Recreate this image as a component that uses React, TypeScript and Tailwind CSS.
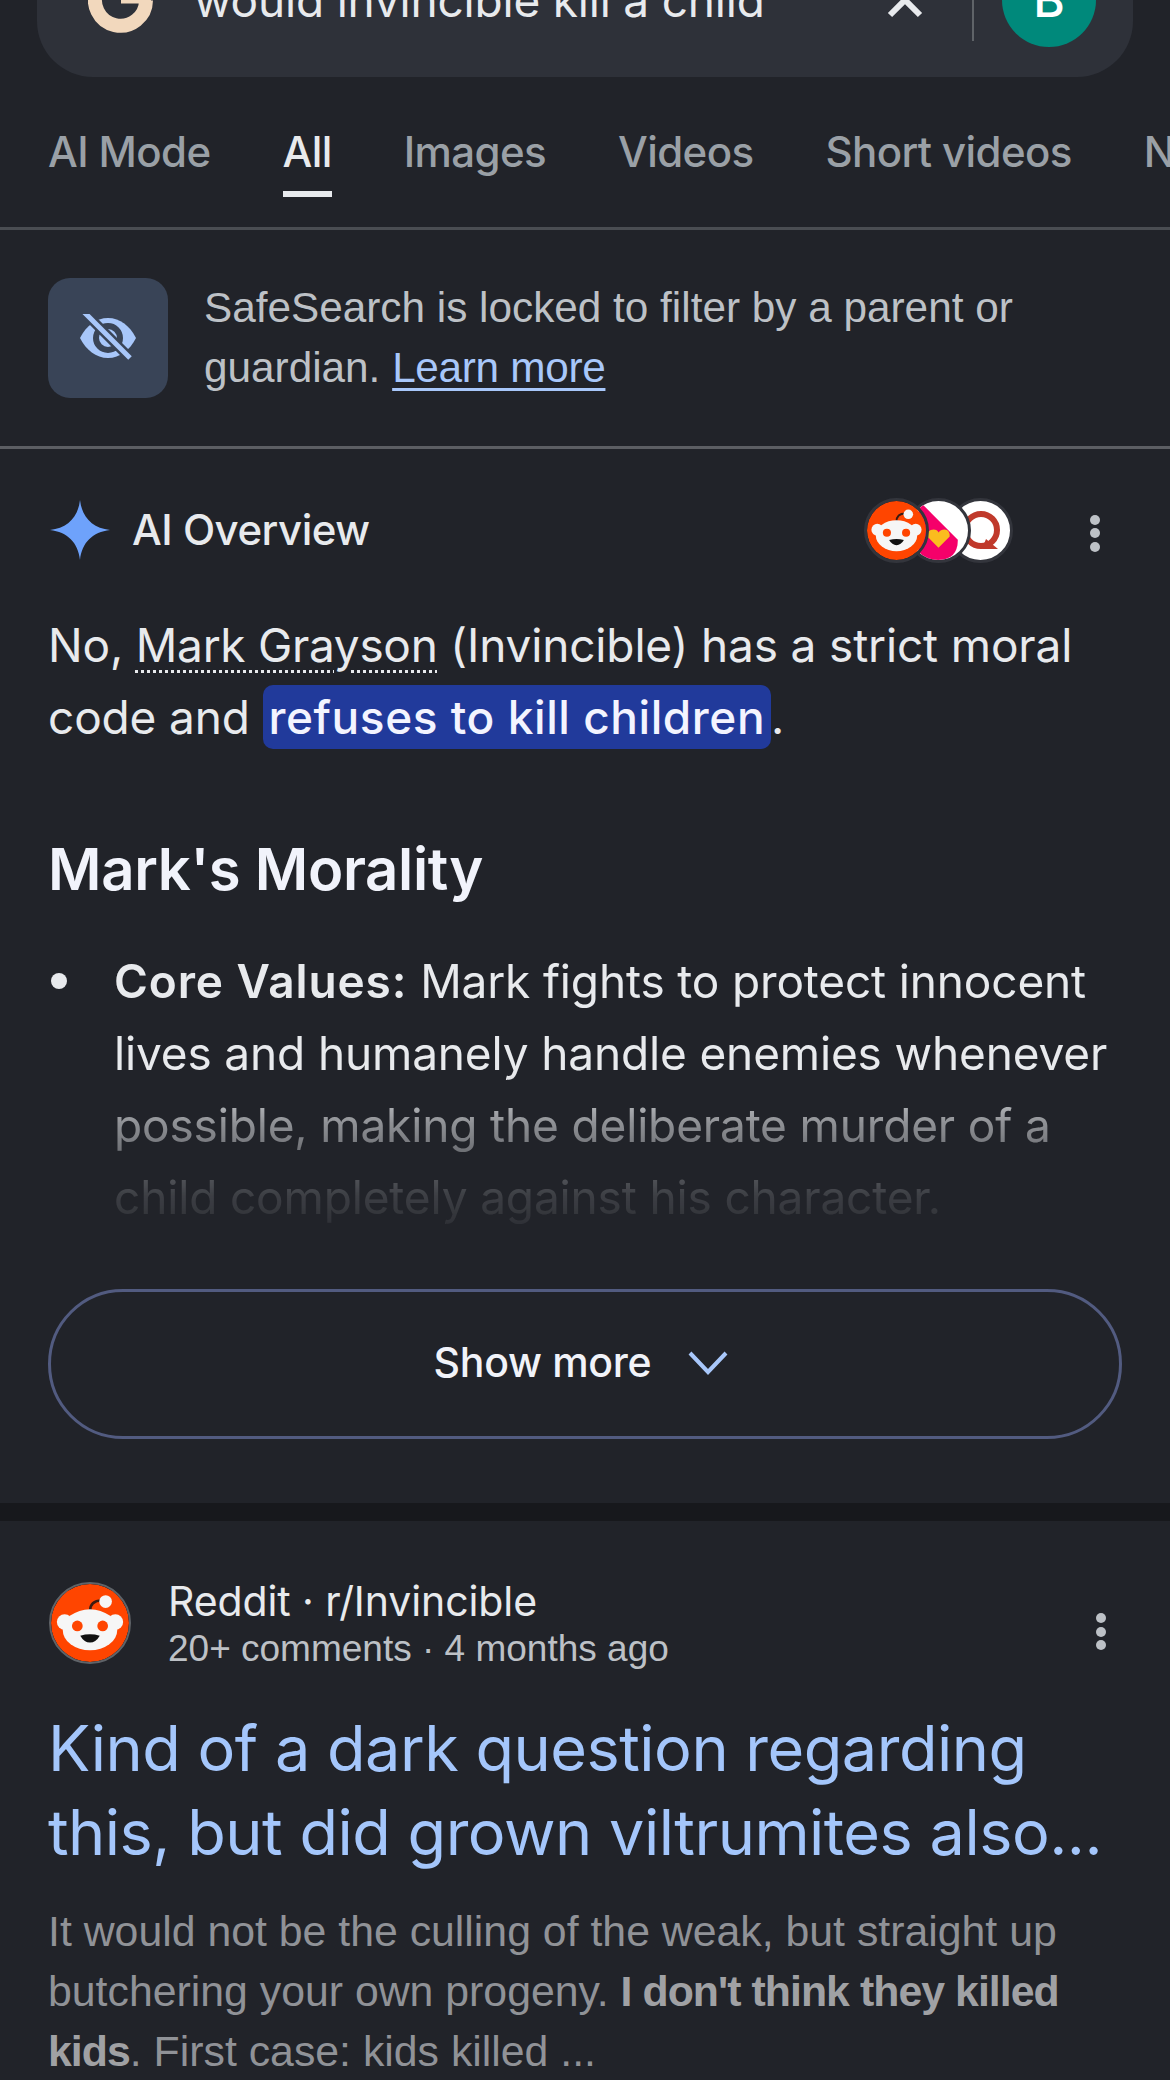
import React from "react";

const sans = "font-['Inter','Liberation_Sans',sans-serif]";
const arial = "font-['Liberation_Sans',Arial,sans-serif]";

function Snoo({ size }: { size: number }) {
  return (
    <svg width={size} height={size} viewBox="0 0 80 80" className="block">
      <circle cx="40" cy="40" r="40" fill="#ff4500" />
      <path d="M40 28 C40 21 44 17 52 17" fill="none" stroke="#3a1a10" strokeWidth="2.5" />
      <circle cx="56" cy="18" r="6.5" fill="#f6f6f6" />
      <circle cx="14" cy="39" r="8" fill="#f6f6f6" />
      <circle cx="66" cy="39" r="8" fill="#f6f6f6" />
      <ellipse cx="40" cy="47" rx="28" ry="21" fill="#f6f6f6" />
      <circle cx="27" cy="43" r="5.5" fill="#ff4500" />
      <circle cx="53" cy="43" r="5.5" fill="#ff4500" />
      <path d="M30 53 Q40 50 50 53 Q46 60 40 60 Q34 60 30 53Z" fill="#111" />
    </svg>
  );
}

function Dots({ className }: { className: string }) {
  return (
    <div className={"flex flex-col gap-[3.5px] shrink-0 " + className}>
      <span className="size-[10px] rounded-full bg-[#bdc1c6]" />
      <span className="size-[10px] rounded-full bg-[#bdc1c6]" />
      <span className="size-[10px] rounded-full bg-[#bdc1c6]" />
    </div>
  );
}

function Tab({ label, active }: { label: string; active?: boolean }) {
  return (
    <div className={"flex flex-col items-stretch shrink-0 " + (active ? "text-[#e8eaed]" : "text-[#9aa0a6]")}>
      <span className="text-[42px] leading-[48px] font-medium whitespace-nowrap tracking-[-0.6px]">{label}</span>
      {active && <span className="mt-[15px] h-[6px] bg-[#e8eaed]" />}
    </div>
  );
}

export default function App() {
  return (
    <div className={"h-[2080px] w-[1170px] overflow-hidden bg-[#212329] text-[#e8eaed] " + sans}>
      <div className="mt-[-60px] mx-[37px] h-[137px] rounded-[56px] bg-[#2e3139] flex items-center pl-[51px] pr-[37px] pb-[17px]">
        <svg width="65" height="65" viewBox="0 0 65 65" className="shrink-0">
          <path d="M58 32.5A25.5 25.5 0 1 1 48 12" fill="none" stroke="#f2d8bd" strokeWidth="14" />
          <path d="M33 30H63" stroke="#f2d8bd" strokeWidth="11" />
        </svg>
        <span className="ml-[41px] text-[46px] leading-[56px] tracking-[-0.2px] text-[#e8eaed] whitespace-nowrap">would invincible kill a child</span>
        <svg width="36" height="36" viewBox="0 0 36 36" className="ml-auto shrink-0">
          <path d="M3 3L33 33M33 3L3 33" stroke="#e8eaed" strokeWidth="6" />
        </svg>
        <span className="ml-[49px] w-[2px] h-[82px] bg-[#5f6368] shrink-0" />
        <div className="ml-[28px] size-[94px] rounded-full bg-[#00897b] shrink-0 flex items-center justify-center text-[48px] text-white font-medium">B</div>
      </div>

      <div className="mt-[51px] pl-[48px] flex gap-[72px] overflow-hidden h-[102px] border-b-[3px] border-[#4a4d52]">
        <Tab label="AI Mode" />
        <Tab label="All" active />
        <Tab label="Images" />
        <Tab label="Videos" />
        <Tab label="Short videos" />
        <Tab label="News" />
      </div>

      <div className="h-[219px] pl-[48px] pr-[40px] flex items-center gap-[36px] border-b-[3px] border-[#5c5e63]">
        <div className="size-[120px] shrink-0 rounded-[22px] bg-[#394457] flex items-center justify-center">
          <svg width="56" height="48" viewBox="0 0 56 48">
            <path d="M0 24C6 12 16 4 28 4S50 12 56 24C50 36 40 44 28 44S6 36 0 24Z" fill="#a8c7fa" />
            <circle cx="28" cy="24" r="12" fill="none" stroke="#394457" strokeWidth="6" />
            <path d="M6 0L52 46" stroke="#394457" strokeWidth="10" />
            <path d="M4 -2L50 44" stroke="#a8c7fa" strokeWidth="5" />
          </svg>
        </div>
        <p className={"text-[42.3px] leading-[60px] text-[#bdc1c6] " + arial}>
          SafeSearch is locked to filter by a parent or guardian.{" "}
          <span className="text-[#a8c7fa] underline underline-offset-[6px] decoration-[3px] tracking-[-0.3px]">Learn more</span>
        </p>
      </div>

      <div className="pl-[50px] pr-[70px] pt-[2px] flex items-center h-[160px]">
        <svg width="60" height="60" viewBox="0 0 62 62" className="shrink-0">
          <path d="M31 0C33 18 44 29 62 31C44 33 33 44 31 62C29 44 18 33 0 31C18 29 29 18 31 0Z" fill="#6ea2fb" />
        </svg>
        <span className="ml-[22px] mb-[2px] text-[42px] font-medium tracking-[-0.5px]">AI Overview</span>
        <div className="ml-auto flex items-center mr-[77px]">
          <div className="relative z-[3] size-[65px] rounded-full border-[3px] border-[#33353c] overflow-hidden"><Snoo size={59} /></div>
          <div className="relative z-[2] -ml-[23px] size-[65px] rounded-full border-[3px] border-[#33353c] bg-white overflow-hidden">
            <svg width="59" height="59" viewBox="0 0 58 58" className="block">
              <path d="M10 0L48 38Q48 58 28 58Q8 58 8 40Z" fill="#f5006a" />
              <path d="M29 46L18 35Q18 28 24 28Q28 28 29 31Q31 28 35 28Q40 28 40 35Z" fill="#fbbc1e" />
            </svg>
          </div>
          <div className="relative z-[1] -ml-[23px] size-[65px] rounded-full border-[3px] border-[#33353c] bg-white flex items-center justify-center">
            <svg width="42" height="42" viewBox="0 0 42 42">
              <circle cx="21" cy="21" r="16" fill="none" stroke="#c0392b" strokeWidth="6" />
              <path d="M26 30L38 40H22Z" fill="#c0392b" />
            </svg>
          </div>
        </div>
        <Dots className="mt-[6px]" />
      </div>

      <p className="mx-[48px] text-[46px] leading-[72px] tracking-[-0.15px]">
        No, <span className="underline decoration-dotted underline-offset-[8px] decoration-[3px] tracking-[-0.3px]">Mark Grayson</span> (Invincible) has a strict moral code and{" "}
        <span className="bg-[#213a9b] rounded-[10px] px-[6px] py-[4px] text-[#f3f4ff] font-medium tracking-[0.55px]">refuses to kill children</span>.
      </p>

      <h2 className="mx-[48px] mt-[80px] text-[58px] leading-[72px] font-semibold tracking-[-0.3px] text-[#f1f3fb]">Mark's Morality</h2>

      <div className="mx-[48px] mt-[40px] flex text-[46px] leading-[72px] tracking-[-0.15px] h-[288px] [mask-image:linear-gradient(to_bottom,#000_45%,rgba(0,0,0,0.55)_62%,rgba(0,0,0,0.14)_87%,rgba(0,0,0,0.05)_100%)]">
        <span className="w-[66px] shrink-0 flex pt-[28px] pl-[3px]"><span className="size-[16px] rounded-full bg-[#e8eaed]" /></span>
        <p className="pr-[6px]"><span className="font-semibold tracking-[0.9px]">Core Values:</span> Mark fights to protect innocent lives and humanely handle enemies whenever possible, making the deliberate murder of a child completely against his character.</p>
      </div>

      <div className="mx-[48px] mt-[56px] h-[150px] rounded-full border-[3px] border-[#525b80] flex items-center justify-center gap-[36px] pr-[7px] pb-[3px]">
        <span className="text-[41px] font-medium tracking-[-0.3px] text-[#f1f3f9]">Show more</span>
        <svg width="42" height="26" viewBox="0 0 42 26"><path d="M3 3L21 22L39 3" fill="none" stroke="#a8c7fa" strokeWidth="4" /></svg>
      </div>

      <div className="mt-[64px] h-[18px] bg-[#17181c]" />

      <div className="flex items-start pl-[49px] pr-[64px] mt-[57px] h-[94px]">
        <div className="mt-[4px] size-[82px] rounded-full border-[2px] border-[#5f6368] overflow-hidden shrink-0"><Snoo size={78} /></div>
        <div className="ml-[37px]">
          <div className="text-[41px] leading-[47px] tracking-[-0.1px]">Reddit · r/Invincible</div>
          <div className={"text-[37px] leading-[47px] text-[#bdc1c6] " + arial}>20+ comments · 4 months ago</div>
        </div>
        <Dots className="ml-auto mt-[35px]" />
      </div>

      <h3 className="mx-[48px] mt-[34px] text-[63px] leading-[84px] text-[#a4c6fb] tracking-[-0.5px]">Kind of a dark question regarding this, but did grown viltrumites also...</h3>

      <p className={"mx-[48px] mt-[27px] text-[42.8px] leading-[60px] text-[#909297] " + arial}>
        It would not be the culling of the weak, but straight up butchering your own progeny. <span className="font-bold text-[#a0a1a4] tracking-[-0.95px]">I don't think they killed kids</span>. First case: kids killed ...
      </p>
    </div>
  );
}
